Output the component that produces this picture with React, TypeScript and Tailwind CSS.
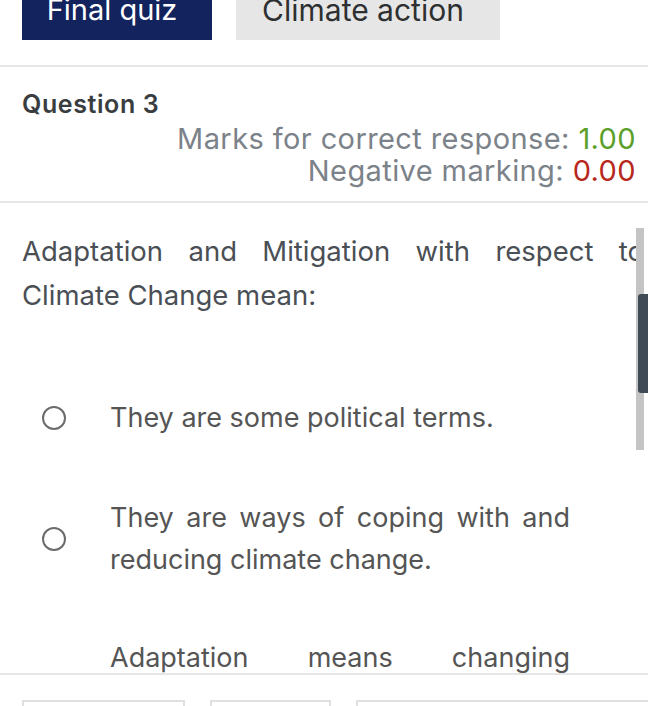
import React from "react";

const font = { fontFamily: "Inter, 'Open Sans', sans-serif" };

function Radio() {
  return (
    <span className="block w-[24px] h-[24px] rounded-full border-[2px] border-[#6b6b6b] bg-white shrink-0" />
  );
}

export default function App() {
  return (
    <div className="w-[648px] h-[706px] overflow-hidden bg-white relative" style={font}>
      {/* top buttons */}
      <div className="flex gap-[24px] pl-[22px] mt-[-21px]">
        <div className="w-[190px] h-[61px] bg-[#13235d] text-white text-[29px] flex items-center justify-center leading-none pr-[10px]">
          Final quiz
        </div>
        <div className="w-[264px] h-[61px] bg-[#e6e6e6] text-[#2d2f31] text-[30px] flex items-center justify-center leading-none pr-[10px]">
          Climate action
        </div>
      </div>
      <div className="h-[25px]" />
      <div className="h-[2px] bg-[#e6e6e6]" />

      <div className="pl-[22px] pt-[22px] text-[25px] tracking-[0.6px] font-semibold text-[#3a3d40] leading-[30px]">
        Question 3
      </div>
      <div className="pr-[12px] text-right text-[29px] tracking-[0.4px] text-[#7c8289] leading-[32px] mt-[4px]">
        <div>
          Marks for correct response: <span className="text-[#5b9f2a]">1.00</span>
        </div>
        <div>
          Negative marking: <span className="text-[#b8271c]">0.00</span>
        </div>
      </div>
      <div className="h-[2px] bg-[#e6e6e6] mt-[14px]" />

      <p className="pl-[22px] pr-[4px] pt-[26px] text-[27.5px] leading-[44px] text-[#4a4f55] text-justify">
        Adaptation and Mitigation with respect to Climate Change mean:
      </p>

      <div className="mt-[80px] flex flex-col">
        <div className="flex items-center">
          <div className="w-[110px] flex pl-[42px]">
            <Radio />
          </div>
          <div className="w-[460px] text-[27px] leading-[42px] text-[#555555]">They are some political terms.</div>
        </div>
        <div className="flex items-center mt-[58px]">
          <div className="w-[110px] flex pl-[42px]">
            <Radio />
          </div>
          <div className="w-[460px] text-[27px] leading-[42px] text-[#555555] text-justify">
            They are ways of coping with and reducing climate change.
          </div>
        </div>
        <div className="flex items-center mt-[56px]">
          <div className="w-[110px]" />
          <div
            className="w-[460px] text-[27px] leading-[42px] text-[#555555] text-justify"
            style={{ textAlignLast: "justify" }}
          >
            Adaptation means changing
          </div>
        </div>
      </div>

      <div className="absolute left-0 right-0 top-[673px] h-[2px] bg-[#e6e6e6]" />
      <div className="absolute left-0 right-0 top-[700px] flex gap-[25px] pl-[22px]">
        <div className="w-[163px] h-[20px] border-[2px] border-[#e0e0e0]" />
        <div className="w-[121px] h-[20px] border-[2px] border-[#e0e0e0]" />
        <div className="flex-1 h-[20px] border-[2px] border-r-0 border-[#e0e0e0]" />
      </div>

      {/* scrollbar */}
      <div className="absolute left-[636px] top-[228px] w-[8px] h-[222px] bg-[#c4c4c4]" />
      <div className="absolute left-[638px] top-[294px] w-[10px] h-[99px] bg-[#3f4a56] rounded-l-[3px]" />
    </div>
  );
}
